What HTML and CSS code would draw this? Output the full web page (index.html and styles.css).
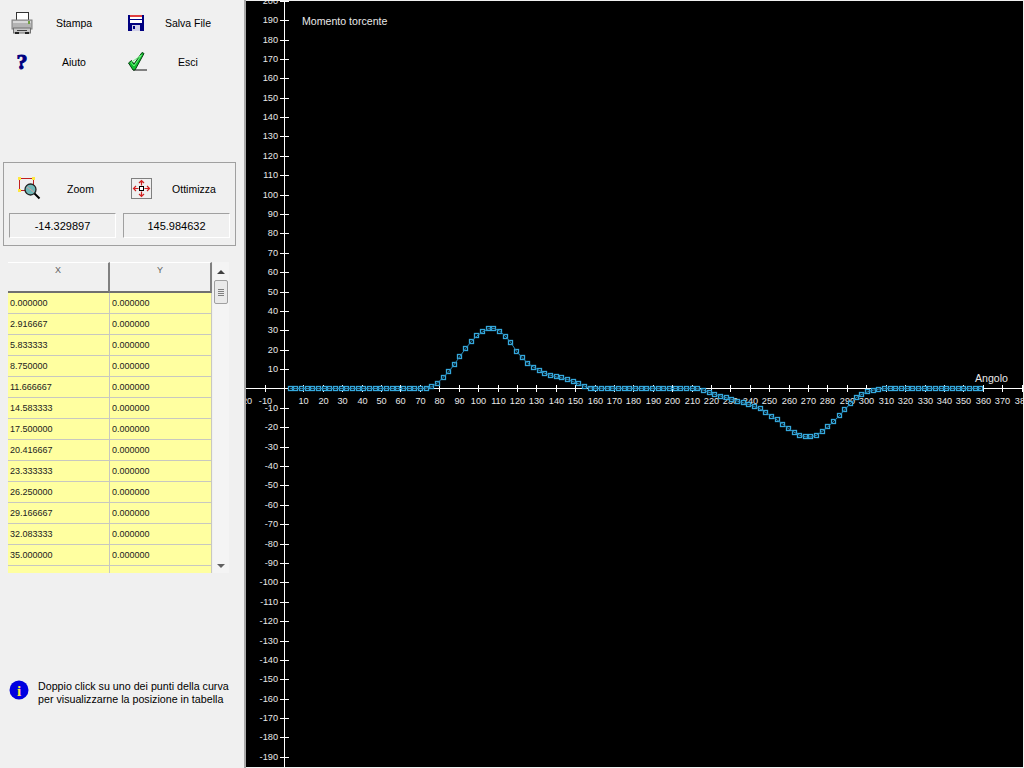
FILE: index.html
```html
<!DOCTYPE html>
<html lang="it">
<head>
<meta charset="utf-8">
<title>Momento torcente</title>
<link rel="stylesheet" href="styles.css">
</head>
<body>
<div class="app">
  <aside class="side">
    <div class="tools">
      <div class="tool">
        <span class="ico"><svg width="22" height="22" viewBox="0 0 22 22"><rect x="5.5" y="0.5" width="12" height="9" fill="#fff" stroke="#333"/><rect x="1" y="8" width="20" height="9" fill="#b4b4b4" stroke="#808080"/><rect x="2" y="9" width="18" height="2" fill="#d8d8d8"/><rect x="17" y="9" width="2" height="3" fill="#70a040"/><rect x="2.5" y="16" width="17" height="5" fill="#c8c8c8" stroke="#707070"/><rect x="4" y="20" width="4" height="2" fill="#222"/><rect x="14" y="20" width="4" height="2" fill="#222"/><rect x="6" y="18" width="10" height="1" fill="#444"/></svg></span>
        <span class="lbl">Stampa</span>
      </div>
      <div class="tool">
        <span class="ico"><svg width="16" height="16" viewBox="0 0 16 16"><rect width="16" height="16" fill="#000080"/><rect x="2" y="0" width="12" height="2" fill="#e04040"/><rect x="2" y="2" width="12" height="6" fill="#fff"/><rect x="2" y="4" width="12" height="1" fill="#000080"/><rect x="4" y="10" width="8" height="6" fill="#d0d0e8"/><rect x="5" y="11" width="2" height="3" fill="#000080"/></svg></span>
        <span class="lbl">Salva File</span>
      </div>
      <div class="tool">
        <span class="ico"><span class="qmark">?</span></span>
        <span class="lbl">Aiuto</span>
      </div>
      <div class="tool">
        <span class="ico"><svg class="check" width="19" height="20" viewBox="0 0 19 20"><rect x="5" y="17" width="14" height="2" fill="#808080"/><polygon points="0.5,11 3.5,8.5 6,12 14,0.5 16,1.5 7,18 5,18" fill="#10c030" stroke="#064010"/><polygon points="3,10.5 6,14 13.5,3" fill="none" stroke="#70f080"/></svg></span>
        <span class="lbl">Esci</span>
      </div>
    </div>

    <section class="group">
      <div class="gtools">
        <div class="tool">
          <span class="ico"><svg width="23" height="23" viewBox="0 0 23 23"><rect x="1.5" y="1.5" width="14" height="12" fill="none" stroke="#c02020"/><rect x="0" y="0" width="3" height="3" fill="#ffe840"/><rect x="14" y="0" width="3" height="3" fill="#ffe840"/><rect x="0" y="12" width="3" height="3" fill="#ffe840"/><rect x="14" y="12" width="3" height="3" fill="#ffe840"/><circle cx="12.5" cy="12.5" r="5.5" fill="#70b8b8" stroke="#222" stroke-width="1.3"/><path d="M9 10l7 5" stroke="#d8a0a0"/><path d="M16.5 16.5l5 5" stroke="#000" stroke-width="2"/></svg></span>
          <span class="lbl">Zoom</span>
        </div>
        <div class="tool">
          <span class="ico"><svg width="21" height="21" viewBox="0 0 21 21"><rect x="0.5" y="0.5" width="20" height="20" fill="#f0f0f0" stroke="#808080"/><path d="M10.5 2.5v5M10.5 13.5v5M2.5 10.5h5M13.5 10.5h5M8 5l2.5-2.5L13 5M8 16l2.5 2.5L13 16M5 8l-2.5 2.5L5 13M16 8l2.5 2.5L16 13" fill="none" stroke="#d02020" stroke-width="1.2"/><rect x="8.5" y="8.5" width="4" height="4" fill="#fff" stroke="#000"/></svg></span>
          <span class="lbl">Ottimizza</span>
        </div>
      </div>
      <div class="fields">
        <div class="field">-14.329897</div>
        <div class="field">145.984632</div>
      </div>
    </section>

    <div class="tablewrap">
      <div class="table">
        <div class="th">X</div><div class="th">Y</div>
        <div class="td">0.000000</div><div class="td">0.000000</div>
        <div class="td">2.916667</div><div class="td">0.000000</div>
        <div class="td">5.833333</div><div class="td">0.000000</div>
        <div class="td">8.750000</div><div class="td">0.000000</div>
        <div class="td">11.666667</div><div class="td">0.000000</div>
        <div class="td">14.583333</div><div class="td">0.000000</div>
        <div class="td">17.500000</div><div class="td">0.000000</div>
        <div class="td">20.416667</div><div class="td">0.000000</div>
        <div class="td">23.333333</div><div class="td">0.000000</div>
        <div class="td">26.250000</div><div class="td">0.000000</div>
        <div class="td">29.166667</div><div class="td">0.000000</div>
        <div class="td">32.083333</div><div class="td">0.000000</div>
        <div class="td">35.000000</div><div class="td">0.000000</div>
        <div class="td">37.916667</div><div class="td">0.000000</div>
      </div>
      <div class="scroll">
        <span class="arrow up"></span>
        <span class="thumb"><i></i><i></i><i></i><i></i></span>
        <span class="arrow down"></span>
      </div>
    </div>

    <div class="hint">
      <svg class="info" width="20" height="20" viewBox="0 0 20 20"><circle cx="10" cy="10" r="9.5" fill="#0000e0"/><text x="10" y="16" class="info-i">i</text></svg>
      <p>Doppio click su uno dei punti della curva<br>per visualizzarne la posizione in tabella</p>
    </div>
  </aside>
  <main class="plot">
    <svg id="chart" class="chart" width="777" height="766" viewBox="246 1 777 766"></svg>
  </main>
</div>
<script src="script.js"></script>
</body>
</html>
```
FILE: styles.css
```css
* { box-sizing: border-box; }
html, body { margin: 0; height: 100%; overflow: hidden; }
body { background: #f0f0f0; font-family: "Liberation Sans", Arial, sans-serif; font-size: 10.5px; color: #000; }
.app { display: flex; width: 1024px; height: 768px; }

.side { width: 246px; flex: none; height: 768px; border-right: 2px solid #a8a8a8; padding-left: 3px; display: flex; flex-direction: column; }

.tools { display: grid; grid-template-columns: 116px 116px; grid-auto-rows: 39px; padding-top: 3px; height: 162px; }
.tool { display: flex; align-items: center; height: 39px; }
.ico { width: 38px; flex: none; display: flex; justify-content: center; align-items: center; }
.tool:nth-child(even) .ico { width: 34px; justify-content: center; }
.lbl { flex: 1; text-align: center; padding-right: 12px; white-space: nowrap; }
.check { margin-left: 2px; }
.qmark { font: bold 22px/20px "Liberation Serif", serif; color: #000080; -webkit-text-stroke: 1px #000080; }

.group { width: 233px; height: 84px; border: 1px solid #a0a0a0; padding: 5px 5px 0; }
.gtools { display: grid; grid-template-columns: 112px 110px; height: 40px; }
.gtools .tool { height: 40px; }
.gtools .ico { width: 40px; }
.gtools .tool:nth-child(even) .ico { width: 41px; }
.gtools .lbl { padding: 2px 9px 0 0; }
.gtools .tool:nth-child(even) .lbl { padding: 2px 5px 0 0; }
.fields { display: flex; gap: 7px; margin-top: 5px; }
.field { width: 108px; height: 25px; line-height: 25px; text-align: center; font-size: 11px; border: 1px solid; border-color: #a0a0a0 #fff #fff #a0a0a0; }

.tablewrap { display: flex; margin: 16px 0 0 5px; height: 311px; }
.table { width: 204px; height: 311px; overflow: hidden; display: grid; grid-template-columns: 102px 102px; grid-auto-rows: 21px; grid-template-rows: 31px; font-size: 9px; }
.th { height: 31px; background: #f0f0f0; border-top: 1px solid #fff; border-right: 2px solid #808080; border-bottom: 2px solid #707070; text-align: center; color: #606060; padding-top: 2px; }
.td { height: 21px; background: #ffffa0; border-right: 1px solid #c8c8c0; border-bottom: 1px solid #c8c8c0; line-height: 21px; padding-left: 2px; color: #222; }
.scroll { width: 16px; margin-left: 1px; background: #f4f4f4; display: flex; flex-direction: column; align-items: center; padding: 8px 0 5px; }
.arrow { width: 0; height: 0; border-left: 4px solid transparent; border-right: 4px solid transparent; flex: none; }
.arrow.up { border-bottom: 4px solid #404040; }
.arrow.down { border-top: 4px solid #606060; margin-top: auto; }
.thumb { width: 14px; height: 24px; margin-top: 6px; border: 1px solid #a0a0a0; border-radius: 2px; background: #eaeaea; display: flex; flex-direction: column; align-items: center; justify-content: center; gap: 1px; }
.thumb i { width: 6px; height: 1px; background: #808080; display: block; }

.hint { display: flex; margin: 104px 0 0 6px; }
.info { flex: none; margin-top: 3px; }
.info-i { font: bold 15px "Liberation Serif", serif; fill: #ffe840; text-anchor: middle; }
.hint p { margin: 3px 0 0 9px; font-size: 10.7px; line-height: 13px; white-space: nowrap; }

.plot { flex: 1; height: 768px; padding-top: 1px; background: #f0f0f0; }
.chart { display: block; background: #000; }
.ax { stroke: #fff; stroke-width: 1; shape-rendering: crispEdges; }
.tk { fill: #e8e8e8; font: 9.2px "Liberation Sans", Arial, sans-serif; }
.tk.x { text-anchor: middle; }
.tk.y { text-anchor: end; }
.cap { fill: #e8e8e8; font: 10.6px "Liberation Sans", Arial, sans-serif; }
.curve { fill: none; stroke: #2a8ab8; stroke-width: 1; }
.pt { fill: #000; stroke: #35a8dc; stroke-width: 1.3; }
```
FILE: script.js
```js
(function () {
  var NS = 'http://www.w3.org/2000/svg';
  var svg = document.getElementById('chart');
  var X0 = 284.5, Y0 = 388.5, SX = 1.941, SY = 1.9387;

  function el(name, attrs, text) {
    var n = document.createElementNS(NS, name);
    for (var k in attrs) n.setAttribute(k, attrs[k]);
    if (text !== undefined) n.textContent = text;
    svg.appendChild(n);
    return n;
  }

  el('line', { 'class': 'ax', x1: 246, x2: 1023, y1: Y0, y2: Y0 });
  el('line', { 'class': 'ax', x1: X0, x2: X0, y1: 0, y2: 768 });

  for (var v = -200; v <= 200; v += 10) {
    if (v === 0) continue;
    var y = Math.round(Y0 - v * SY);
    el('line', { 'class': 'ax', x1: 280, x2: 289, y1: y + 0.5, y2: y + 0.5 });
    el('text', { 'class': 'tk y', x: 278, y: y + 3 }, String(v));
  }
  for (var a = -20; a <= 380; a += 10) {
    if (a === 0) continue;
    var x = Math.round(X0 - 0.5 + a * SX) + 0.5;
    el('line', { 'class': 'ax', x1: x, x2: x, y1: 385, y2: 392 });
    el('text', { 'class': 'tk x', x: x, y: 403.5 }, String(a));
  }
  el('text', { 'class': 'cap', x: 302, y: 25 }, 'Momento torcente');
  el('text', { 'class': 'cap', x: 975, y: 382 }, 'Angolo');

  var knots = [[0,0],[72,0],[75,0.5],[78,2],[80,4],[85,9],[90,16],[95,23],[100,28],[105,30.8],[108,31],[110,30.3],[115,26],[120,18.5],[125,13.2],[130,9.9],[135,7.4],[140,6],[145,5],[150,3],[155,1],[158,0.1],[212,0],[215,-0.5],[220,-2.5],[225,-4],[230,-5.5],[235,-7],[240,-8.5],[245,-10.5],[250,-13.7],[255,-17],[260,-21],[265,-24],[270,-25.4],[275,-23.8],[280,-19.7],[285,-15],[290,-9.4],[295,-4.2],[300,-1.8],[305,-0.4],[310,0],[360,0]];

  function val(t) {
    for (var i = 1; i < knots.length; i++) {
      if (t <= knots[i][0]) {
        var a = knots[i - 1], b = knots[i];
        return a[1] + (b[1] - a[1]) * (t - a[0]) / (b[0] - a[0]);
      }
    }
    return 0;
  }

  var pts = [], i;
  for (i = 1; i <= 123; i++) {
    var t = i * 35 / 12;
    pts.push([X0 + t * SX, Y0 - val(t) * SY]);
  }
  pts.forEach(function (p) {
    el('rect', { 'class': 'pt', x: Math.round(p[0] - 0.5) - 1.5, y: Math.round(p[1] - 0.5) - 1.5, width: 4, height: 4 });
  });
  el('polyline', { 'class': 'curve', points: pts.map(function (p) { return p[0].toFixed(1) + ',' + p[1].toFixed(1); }).join(' ') });
})();
```
